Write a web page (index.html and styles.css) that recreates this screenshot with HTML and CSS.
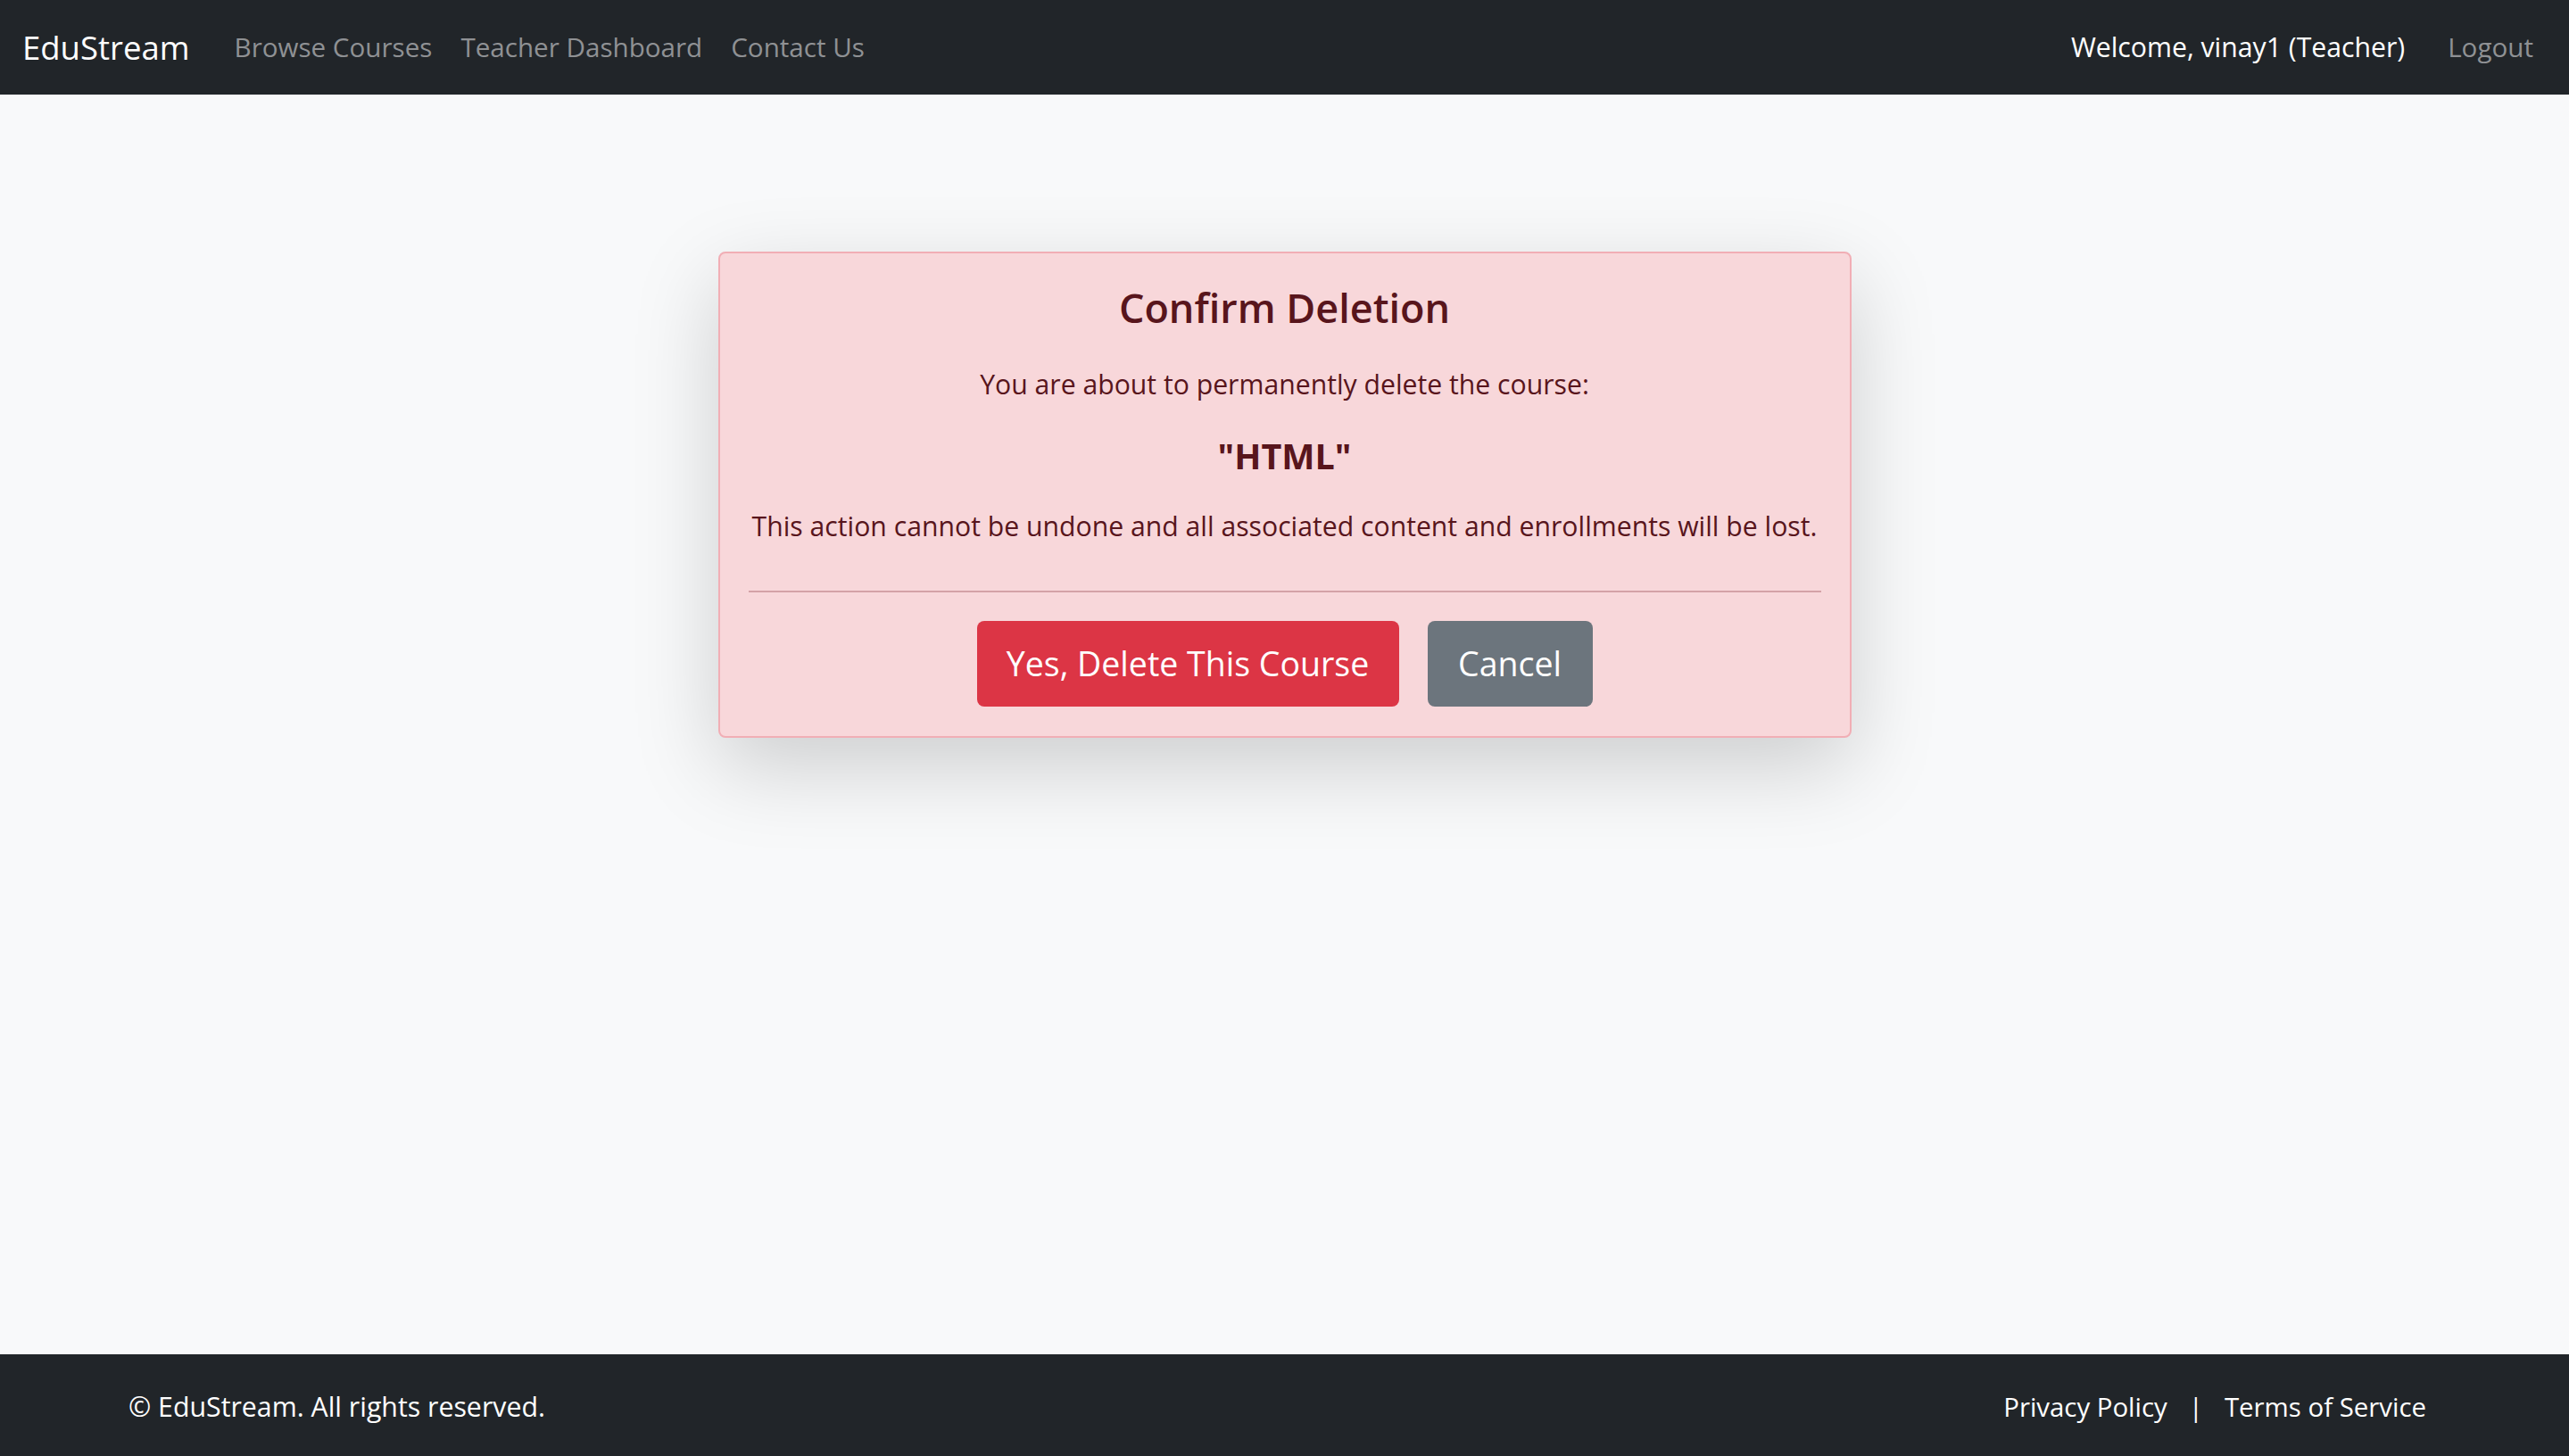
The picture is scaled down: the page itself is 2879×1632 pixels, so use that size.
FILE: index.html
```html
<!DOCTYPE html>
<html lang="en">
<head>
<meta charset="utf-8">
<title>EduStream - Confirm Deletion</title>
<link rel="stylesheet" href="styles.css">
</head>
<body>
<nav class="navbar">
  <a class="brand" href="#">EduStream</a>
  <ul class="nav-links">
    <li><a class="nav-link" href="#">Browse Courses</a></li>
    <li><a class="nav-link" href="#">Teacher Dashboard</a></li>
    <li><a class="nav-link" href="#">Contact Us</a></li>
  </ul>
  <div class="nav-right">
    <span class="welcome">Welcome, vinay1 (Teacher)</span>
    <a class="nav-link" href="#">Logout</a>
  </div>
</nav>
<main class="main">
  <section class="confirm-box">
    <h4 class="confirm-title">Confirm Deletion</h4>
    <p class="confirm-text">You are about to permanently delete the course:</p>
    <h5 class="course-name">"HTML"</h5>
    <p class="confirm-text warn">This action cannot be undone and all associated content and enrollments will be lost.</p>
    <hr class="divider">
    <div class="actions">
      <button class="btn btn-danger" type="button">Yes, Delete This Course</button>
      <a class="btn btn-secondary" href="#">Cancel</a>
    </div>
  </section>
</main>
<footer class="footer">
  <p class="copyright">© EduStream. All rights reserved.</p>
  <div class="footer-links">
    <a class="footer-link" href="#">Privacy Policy</a>
    <span class="sep">|</span>
    <a class="footer-link" href="#">Terms of Service</a>
  </div>
</footer>
</body>
</html>
```
FILE: styles.css
```css
* { box-sizing: border-box; }
html, body { margin: 0; padding: 0; }
body {
  font-family: "Segoe UI", "Open Sans", "Noto Sans", sans-serif;
  background: #f8f9fa;
  color: #212529;
  min-height: 100vh;
  display: flex;
  flex-direction: column;
}
a { text-decoration: none; }

.navbar {
  height: 106px;
  flex: 0 0 auto;
  background: #212529;
  display: flex;
  align-items: center;
  padding: 0 24px;
}
.brand {
  color: #fff;
  font-size: 36.5px;
  line-height: 54px;
  margin-right: 34px;
  margin-left: 1px;
}
.nav-links {
  list-style: none;
  margin: 0;
  padding: 0;
  display: flex;
  flex: 1;
}
.nav-link {
  display: block;
  color: #8f9194;
  font-size: 29.6px;
  line-height: 46px;
  padding: 0 16px;
}
.nav-right {
  display: flex;
  align-items: center;
}
.welcome {
  color: #fff;
  font-size: 30.2px;
  line-height: 46px;
  margin-right: 32px;
}

.main {
  flex: 1 1 auto;
  background: #f8f9fa;
  display: flex;
  flex-direction: column;
  align-items: center;
}
.confirm-box {
  margin-top: 176px;
  width: 1270px;
  background: #f8d7da;
  border: 2px solid #f1aeb5;
  border-radius: 8px;
  color: #58151c;
  padding: 32px 32px 33px;
  text-align: center;
  box-shadow: 0 32px 96px rgba(0, 0, 0, 0.175);
}
.confirm-title {
  margin: 0 0 33px;
  font-size: 45px;
  font-weight: 600;
  line-height: 58px;
}
.confirm-text {
  margin: 0 0 31px;
  font-size: 30.2px;
  line-height: 48px;
}
.confirm-text.warn { margin-bottom: 48px; }
.course-name {
  margin: 0 0 30px;
  font-size: 39.5px;
  font-weight: 700;
  line-height: 50px;
}
.divider {
  margin: 0 0 32px;
  border: 0;
  height: 2px;
  background: #d4a2a7;
}
.actions {
  display: flex;
  justify-content: center;
  gap: 32px;
}
.btn {
  display: inline-flex;
  align-items: center;
  justify-content: center;
  height: 96px;
  padding: 0 32px;
  border: 0;
  border-radius: 8px;
  color: #fff;
  font-family: inherit;
  font-size: 37.5px;
  line-height: 56px;
  cursor: pointer;
}
.btn-danger { background: #dc3545; width: 473px; }
.btn-secondary { background: #6c757d; width: 185px; }

.footer {
  flex: 0 0 auto;
  height: 114px;
  background: #212529;
  color: #fff;
  display: flex;
  align-items: center;
  justify-content: space-between;
  padding: 4px 160px 0 144px;
  font-size: 30.3px;
  line-height: 46px;
}
.copyright { margin: 0; }
.footer-links {
  display: flex;
  align-items: center;
  font-size: 29.4px;
}
.footer-link { color: #fff; }
.sep { margin: 0 24px; }
```
